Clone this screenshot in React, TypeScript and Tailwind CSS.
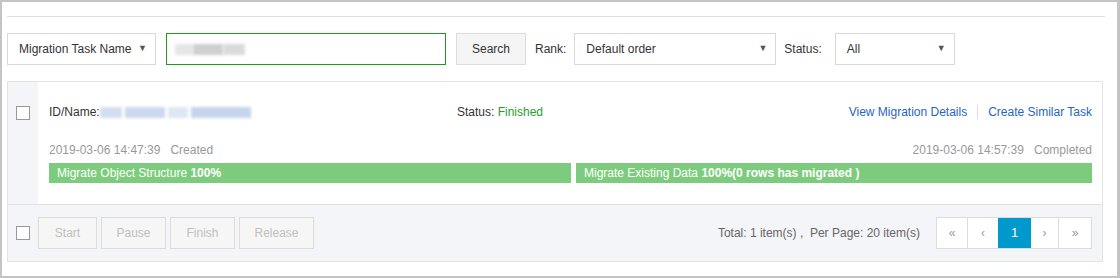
import React from "react";

const font = { fontFamily: '"Liberation Sans", Arial, sans-serif' };

const Select = ({ label, width }: { label: string; width: string }) => (
  <div
    className={`${width} h-8 flex items-center justify-between pl-[11px] pr-[8px] border border-[#d9d9d9] bg-white text-[12px] text-[#333]`}
  >
    <span>{label}</span>
    <span className="text-[9px] text-[#555]">▼</span>
  </div>
);

const Blur = ({ className }: { className: string }) => (
  <div className={`${className} blur-[1.5px]`} />
);

const DisabledButton = ({ label, width }: { label: string; width: string }) => (
  <div
    className={`${width} h-8 flex items-center justify-center border border-[#dcdcdc] bg-[#f6f6f6] text-[12px] text-[#c0c0c0]`}
  >
    {label}
  </div>
);

const Checkbox = () => (
  <div className="w-[14px] h-[14px] border border-[#9a9a9a] bg-white" />
);

export default function App() {
  return (
    <div
      style={font}
      className="w-[1120px] h-[278px] bg-white border-t-2 border-l-2 border-b-2 border-r-[3px] border-[#c4c4c4] pl-[5px] pr-[12px] pt-[14px] overflow-hidden"
    >
      <div className="h-px bg-[#dedede]" />

      {/* filters */}
      <div className="mt-[16px] h-8 flex items-center text-[12px] text-[#333]">
        <Select label="Migration Task Name" width="w-[149px]" />
        <div className="ml-[10px] w-[280px] h-8 border border-[#1f9a1f] bg-white flex items-center pl-[8px]">
          <div className="flex">
            <Blur className="w-[18px] h-[11px] bg-[#e6e6e6]" />
            <Blur className="w-[30px] h-[11px] bg-[#cfcfcf]" />
            <Blur className="w-[22px] h-[11px] bg-[#dadada]" />
          </div>
        </div>
        <div className="ml-[10px] w-[70px] h-8 border border-[#dcdcdc] bg-[#f5f5f5] flex items-center justify-center">
          Search
        </div>
        <span className="ml-[9px]">Rank:</span>
        <div className="ml-[8px]">
          <Select label="Default order" width="w-[202px]" />
        </div>
        <span className="ml-[8px]">Status:</span>
        <div className="ml-[13px]">
          <Select label="All" width="w-[120px]" />
        </div>
      </div>

      {/* task card */}
      <div className="mt-[16px] w-[1096px] border border-[#e3e3e3]">
        <div className="flex">
          <div className="w-[30px] bg-[#f4f5f8] pl-[8px] pt-[24px]">
            <Checkbox />
          </div>
          <div className="flex-1 pl-[11px] pr-[10px] pt-[20px] pb-[21px] text-[12px]">
            <div className="h-5 flex items-center">
              <div className="w-[408px] flex items-center text-[#333]">
                <span>ID/Name:</span>
                <div className="flex gap-[3px]">
                  <Blur className="w-[22px] h-[11px] bg-[#d3def0]" />
                  <Blur className="w-[40px] h-[11px] bg-[#cbd8ee]" />
                  <Blur className="w-[20px] h-[11px] bg-[#dfe7f4]" />
                  <Blur className="w-[60px] h-[11px] bg-[#c6d4ec]" />
                </div>
              </div>
              <span className="text-[#333]">
                Status: <span className="text-[#2a9d2a]">Finished</span>
              </span>
              <div className="ml-auto flex items-center text-[#1f66c4]">
                <span>View Migration Details</span>
                <span className="mx-[10px] w-px h-[14px] bg-[#dcdcdc]" />
                <span>Create Similar Task</span>
              </div>
            </div>
            <div className="mt-[18px] h-5 flex items-center justify-between text-[#999]">
              <span>2019-03-06 14:47:39&nbsp;&nbsp;&nbsp;Created</span>
              <span>2019-03-06 14:57:39&nbsp;&nbsp;&nbsp;Completed</span>
            </div>
            <div className="mt-[3px] flex gap-[5px] text-white">
              <div className="w-[522px] h-5 bg-[#7dcc7d] flex items-center pl-[8px]">
                Migrate Object Structure&nbsp;<b>100%</b>
              </div>
              <div className="flex-1 h-5 bg-[#7dcc7d] flex items-center pl-[8px]">
                Migrate Existing Data&nbsp;<b>100%(0 rows has migrated )</b>
              </div>
            </div>
          </div>
        </div>

        {/* footer */}
        <div className="h-[57px] border-t border-[#e0e0e0] bg-[#f4f5f8] flex items-center pl-[8px] pr-[10px] text-[12px]">
          <Checkbox />
          <div className="ml-[8px] flex gap-[4px]">
            <DisabledButton label="Start" width="w-[59px]" />
            <DisabledButton label="Pause" width="w-[65px]" />
            <DisabledButton label="Finish" width="w-[65px]" />
            <DisabledButton label="Release" width="w-[75px]" />
          </div>
          <span className="ml-auto text-[#666]">
            Total: 1 item(s)&nbsp;,&nbsp;&nbsp;Per Page: 20 item(s)
          </span>
          <div className="ml-[16px] flex h-8 border border-[#dcdcdc] bg-white text-[#999]">
            <div className="w-[31px] flex items-center justify-center border-r border-[#dcdcdc] text-[12px]">«</div>
            <div className="w-[30px] flex items-center justify-center text-[12px]">‹</div>
            <div className="w-[33px] flex items-center justify-center bg-[#0099cc] text-white text-[13px]">1</div>
            <div className="w-[28px] flex items-center justify-center border-r border-[#dcdcdc] text-[12px]">›</div>
            <div className="w-[32px] flex items-center justify-center text-[12px]">»</div>
          </div>
        </div>
      </div>
    </div>
  );
}
